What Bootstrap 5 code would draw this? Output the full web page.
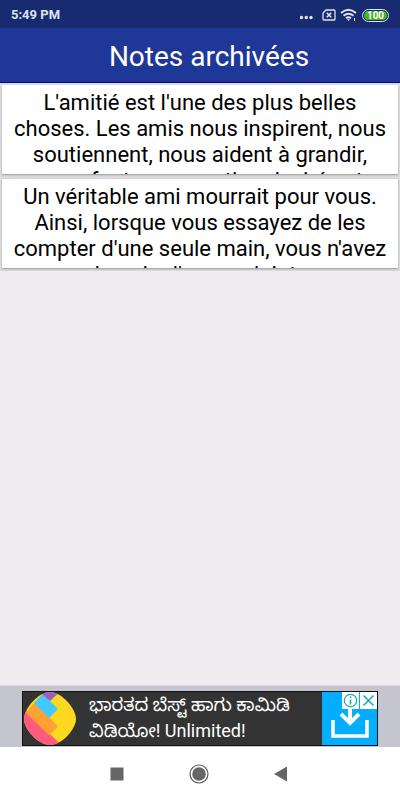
<!DOCTYPE html>
<html lang="fr">
<head>
<meta charset="utf-8">
<meta name="viewport" content="width=device-width, initial-scale=1">
<title>Notes archivées</title>
<link href="https://cdn.jsdelivr.net/npm/bootstrap@5.3.0/dist/css/bootstrap.min.css" rel="stylesheet">
<style>
body { font-family: Roboto, "Noto Sans Kannada", "Noto Sans", sans-serif; background: #eeecee; color: #000; }
.status-bar { background: #182b70; height: 28px; color: #dfe2f0; font-size: 13px; font-weight: 700; padding: 2px 11px 0; }
.app-bar { background: #1f3898; height: 55px; border-bottom: 1px solid #00009a; padding: 2px 0 0 18px; }
.app-bar h1 { font-size: 28px; line-height: 54px; font-weight: 400; }
.note-list { background: #dddbdd; padding: 2px 2px 3px; gap: 5px; }
.note { height: 89px; padding: 5px 6px 0; border-radius: 1px; font-size: 22px; line-height: 26px; box-shadow: 0 1px 2px #999; color: #000; }
.battery { width: 27px; height: 13px; border: 1px solid #dfe2f0; border-radius: 7px; padding: 1px; }
.battery span { background: #45b51c; color: #fff; border-radius: 5px; font-size: 10px; line-height: 10px; }
.ad-band { background: #c5c5cf; border-top: 1px solid #d8d7dc; padding: 5px 22px 1px; }
.ad { background: #333; border: 1px solid #111; height: 55px; }
.ad-copy { font-size: 18px; line-height: 26px; color: #fff; padding-left: 12px; white-space: nowrap; }
.ad-action { width: 55px; background: #03adff; }
.ad-marks { top: 0; right: 0; gap: 1px; }
.ad-marks button { width: 17px; height: 17px; background: #fff; }
.system-nav { height: 53px; padding: 0 109px; }
</style>
</head>
<body class="d-flex flex-column min-vh-100">
<div class="status-bar d-flex align-items-center justify-content-between">
  <span>5:49 PM</span>
  <div class="d-flex align-items-center">
    <svg class="me-2" width="14" height="14" viewBox="0 0 14 14" fill="#dfe2f0"><circle cx="1.500" cy="9.500" r="1.700"/><circle cx="6.300" cy="9.500" r="1.700"/><circle cx="11" cy="9.500" r="1.700"/></svg>
    <svg class="me-1" width="14" height="12" viewBox="0 0 14 12" fill="none" stroke="#dfe2f0" stroke-width="1.3"><path d="M4 1h8q1 0 1 1v8q0 1-1 1H2q-1 0-1-1V4z"/><path d="M4.800 3.700l4.400 4.600M9.200 3.700l-4.400 4.600" stroke-width="1.600"/></svg>
    <svg class="me-1" width="18" height="14" viewBox="0 0 18 14" fill="none" stroke="#dfe2f0" stroke-width="1.800"><path d="M1 5q7.500-6.500 15 0M3.500 7.800q5-4 10 0M6 10.300q2.500-2 5 0"/><path d="M7 11.200h3L8.500 13z" fill="#dfe2f0" stroke="none"/><path d="M14.500 10v3" stroke-width="1"/></svg>
    <div class="battery d-flex"><span class="flex-fill text-center">100</span></div>
  </div>
</div>
<header class="app-bar text-white text-center"><h1 class="m-0">Notes archivées</h1></header>
<main class="flex-grow-1">
  <div class="note-list d-flex flex-column">
    <article class="note bg-white text-center overflow-hidden">L'amitié est l'une des plus belles choses. Les amis nous inspirent, nous soutiennent, nous aident à grandir, nous font une question desirés et</article>
    <article class="note bg-white text-center overflow-hidden">Un véritable ami mourrait pour vous. Ainsi, lorsque vous essayez de les compter d'une seule main, vous n'avez pas besoin d'aucun doigt pour</article>
  </div>
</main>
<aside class="ad-band">
  <div class="ad d-flex position-relative">
    <svg class="flex-shrink-0" width="54" height="53" viewBox="0 0 54 53"><defs><clipPath id="blob"><path d="M27 0C39 0 53 17 53 27S39 53 27 53 1 37 1 27 15 0 27 0z"/></clipPath></defs><g clip-path="url(#blob)"><path fill="#ffd820" d="M0 0h54v53H0z"/><path fill="#ff5b80" d="M0 16L4 19 38 53H0z"/><path fill="#ffa033" d="M3 21L12 10 35 34.500 26 43 35 52z"/><path fill="#41c8ff" d="M11 11L20 2 35 17 26 26z"/><path fill="#9a60bd" d="M15 -2h24L27 9 19 2z"/></g></svg>
    <div class="ad-copy flex-grow-1" lang="kn">ಭಾರತದ ಬೆಸ್ಟ್ ಹಾಗು ಕಾಮಿಡಿ<br>ವಿಡಿಯೋ! Unlimited!</div>
    <button class="ad-action border-0 p-0 flex-shrink-0" aria-label="Télécharger"><svg class="d-block" width="55" height="53" viewBox="0 0 55 53" fill="none" stroke="#fff" stroke-width="4"><path d="M11 28v16h34V28" stroke-width="3.500"/><path d="M28 12v20M19 22l9 9 9-9"/></svg></button>
    <div class="ad-marks d-flex position-absolute">
      <button class="border-0 p-0 d-flex" aria-label="Informations"><svg width="17" height="17" viewBox="0 0 17 17" fill="none" stroke="#1aa8bd" stroke-width="1.200"><circle cx="8.500" cy="8.500" r="6.200"/><path d="M8.500 7.500v5M8.500 4.500v1.600" stroke-width="1.600"/></svg></button>
      <button class="border-0 p-0 d-flex" aria-label="Fermer"><svg width="17" height="17" viewBox="0 0 17 17" fill="none" stroke="#1aa8bd" stroke-width="1.500"><path d="M3.500 3.500l10 10M13.500 3.500l-10 10"/></svg></button>
    </div>
  </div>
</aside>
<nav class="system-nav bg-white d-flex align-items-center justify-content-between">
  <button class="btn p-0 border-0 d-flex" aria-label="Applications récentes"><svg width="15" height="20" viewBox="0 0 15 20"><path fill="#666" d="M1.500 3.500h13v13h-13z"/></svg></button>
  <button class="btn p-0 border-0 d-flex" aria-label="Accueil"><svg width="20" height="20" viewBox="0 0 20 20"><circle cx="10" cy="10" r="9" fill="none" stroke="#555" stroke-width="1.200"/><circle cx="10" cy="10" r="6.800" fill="#666"/></svg></button>
  <button class="btn p-0 border-0 d-flex" aria-label="Retour"><svg width="17" height="20" viewBox="0 0 17 20"><path fill="#666" d="M13 2.500v15L0 10z"/></svg></button>
</nav>
<script src="https://cdn.jsdelivr.net/npm/bootstrap@5.3.0/dist/js/bootstrap.bundle.min.js"></script>
</body>
</html>
